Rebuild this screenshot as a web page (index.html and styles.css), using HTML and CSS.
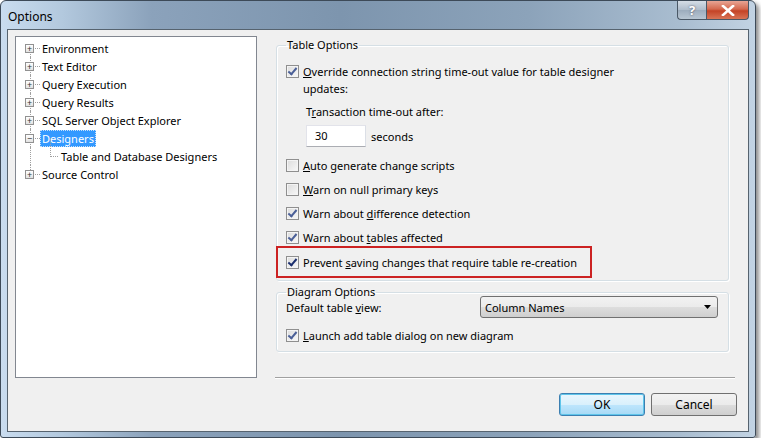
FILE: index.html
```html
<!DOCTYPE html>
<html>
<head>
    <title>Options</title>
    <link rel="stylesheet" href="styles.css">
</head>
<body>
    <div class="window">
        <div class="titlebar">
            <span class="title">Options</span>
            <div class="caption-buttons">
                <span class="cap-btn help">?</span>
                <span class="cap-btn close">
                    <svg width="14" height="11" viewBox="0 0 14 11"><path d="M2 1 L12 10 M12 1 L2 10" stroke="#fff" stroke-width="2.6" stroke-linecap="square"/></svg>
                </span>
            </div>
        </div>

        <div class="client">
            <div class="tree">
                <div class="node first"><span class="exp">+</span><span class="dots"></span><span class="label">Environment</span></div>
                <div class="node"><span class="exp">+</span><span class="dots"></span><span class="label">Text Editor</span></div>
                <div class="node"><span class="exp">+</span><span class="dots"></span><span class="label">Query Execution</span></div>
                <div class="node"><span class="exp">+</span><span class="dots"></span><span class="label">Query Results</span></div>
                <div class="node"><span class="exp">+</span><span class="dots"></span><span class="label">SQL Server Object Explorer</span></div>
                <div class="node"><span class="exp">&minus;</span><span class="dots"></span><span class="label selected">Designers</span></div>
                <div class="node child"><span class="elbow"></span><span class="label">Table and Database Designers</span></div>
                <div class="node last"><span class="exp">+</span><span class="dots"></span><span class="label">Source Control</span></div>
            </div>

            <div class="pane">
                <fieldset class="group table-options">
                    <legend>Table Options</legend>
                    <div class="check-row wrap">
                        <span class="box on"></span>
                        <span><u>O</u>verride connection string time-out value for table designer<br>updates:</span>
                    </div>
                    <div class="timeout">
                        <div class="timeout-label">T<u>r</u>ansaction time-out after:</div>
                        <div class="timeout-input">
                            <span class="textbox">30</span>
                            <span>seconds</span>
                        </div>
                    </div>
                    <div class="check-row"><span class="box"></span><span><u>A</u>uto generate change scripts</span></div>
                    <div class="check-row"><span class="box"></span><span><u>W</u>arn on null primary keys</span></div>
                    <div class="check-row"><span class="box on"></span><span>Warn about <u>d</u>ifference detection</span></div>
                    <div class="check-row"><span class="box on"></span><span>Warn about <u>t</u>ables affected</span></div>
                    <div class="check-row highlight"><span class="box on dark"></span><span>Prevent <u>s</u>aving changes that require table re-creation</span></div>
                </fieldset>

                <fieldset class="group diagram-options">
                    <legend>Diagram Options</legend>
                    <div class="view-row">
                        <span>Default table <u>v</u>iew:</span>
                        <span class="combo">Column Names
                            <svg width="7" height="4" viewBox="0 0 7 4"><path d="M0 0 H7 L3.5 4 Z" fill="#000"/></svg>
                        </span>
                    </div>
                    <div class="check-row"><span class="box on"></span><span><u>L</u>aunch add table dialog on new diagram</span></div>
                </fieldset>

                <div class="separator"></div>

                <div class="buttons">
                    <span class="btn default">OK</span>
                    <span class="btn">Cancel</span>
                </div>
            </div>
        </div>
    </div>
</body>
</html>
```

FILE: styles.css
```css
body {
    margin: 0;
    background: #fff;
    font-family: "Noto Sans", "Open Sans", sans-serif;
    font-size: 11px;
    color: #000;
}
.window {
    width: 756px;
    height: 438px;
    box-sizing: border-box;
    padding: 0 6px 5px 6px;
    border: 1px solid #3d4a58;
    border-radius: 6px 6px 3px 3px;
    background: linear-gradient(90deg, #c9dcef 0%, #b3c9de 8%, #8ba2bb 20%, #7d95ae 45%, #8ca3ba 70%, #a9bdd0 90%, #c2d3e3 100%);
    box-shadow: 3px 3px 4px rgba(0, 0, 0, 0.45);
    display: flex;
    flex-direction: column;
}
.titlebar {
    height: 28px;
    display: flex;
    align-items: flex-start;
    justify-content: space-between;
}
.title {
    margin-top: 7px;
    margin-left: 1px;
    font-size: 12px;
}
.caption-buttons {
    display: flex;
}
.cap-btn {
    height: 19px;
    display: flex;
    align-items: center;
    justify-content: center;
    border: 1px solid #4a5866;
    border-top: none;
    box-sizing: border-box;
}
.help {
    width: 29px;
    border-radius: 0 0 0 4px;
    border-right: none;
    background: linear-gradient(#d5dde6, #aebccb 50%, #9cacbd 51%, #b8c6d3);
    color: #fff;
    font-weight: bold;
    font-size: 13px;
    text-shadow: 0 0 2px #445;
}
.close {
    width: 43px;
    border-radius: 0 0 4px 0;
    background: linear-gradient(#e8a594, #d4694f 45%, #c44326 55%, #d87456);
}
.client {
    flex: 1;
    display: flex;
    background: #f0f0f0;
    border: 1px solid #56636f;
    padding: 6px 0 0 7px;
}
.tree {
    width: 240px;
    height: 338px;
    background: #fff;
    border: 1px solid #828790;
    padding-top: 2px;
}
.node {
    height: 18px;
    display: flex;
    align-items: center;
    padding-left: 9px;
    position: relative;
}
.node::before {
    content: "";
    position: absolute;
    left: 14px;
    top: 0;
    bottom: 0;
    border-left: 1px dotted #a0a0a0;
}
.node.first::before {
    top: 9px;
}
.node.last::before {
    bottom: 9px;
}
.exp {
    position: relative;
    z-index: 1;
    width: 7px;
    height: 7px;
    border: 1px solid #919191;
    background: linear-gradient(#fff, #e2e2e2);
    font-size: 9px;
    line-height: 7px;
    text-align: center;
    color: #333;
}
.dots {
    width: 5px;
    border-top: 1px dotted #a0a0a0;
    margin-left: 1px;
}
.label {
    padding: 0 2px;
    line-height: 17px;
}
.label.selected {
    background: #3399ff;
    color: #fff;
    outline: 1px dotted #c8e0f8;
    outline-offset: -1px;
}
.child {
    padding-left: 34px;
}
.elbow {
    width: 7px;
    height: 18px;
    margin-top: -18px;
    border-left: 1px dotted #a0a0a0;
    border-bottom: 1px dotted #a0a0a0;
    margin-right: 1px;
}
.pane {
    margin-left: 18px;
    flex: 1;
    display: flex;
    flex-direction: column;
}
.group {
    margin: 0 0 0 1px;
    padding: 0 0 0 9px;
    border: 1px solid #d5dfe5;
    border-radius: 3px;
    box-shadow: inset 1px 1px 0 #fff, 1px 1px 0 #fff;
    width: 453px;
    box-sizing: border-box;
    min-width: 0;
}
legend {
    padding: 0 1px;
    line-height: 16px;
}
.table-options {
    height: 244px;
    margin-top: 1px;
}
.check-row {
    display: flex;
    align-items: center;
    height: 24px;
    gap: 4px;
    white-space: nowrap;
}
.check-row.wrap {
    align-items: flex-start;
    height: auto;
    margin-top: 10px;
    line-height: 17px;
}
.check-row.wrap .box {
    margin-top: 2px;
}
.box {
    width: 11px;
    height: 11px;
    border: 1px solid #8f8f8f;
    background: linear-gradient(135deg, #dcdcdc, #f8f8f8);
    box-shadow: inset 0 0 0 1px #f4f4f4;
    flex-shrink: 0;
    position: relative;
}
.box.on::after {
    content: "";
    position: absolute;
    left: 3px;
    top: 0px;
    width: 3px;
    height: 7px;
    border: solid #4a5f97;
    border-width: 0 2px 2px 0;
    transform: rotate(40deg);
}
.box.on.dark::after {
    border-color: #1c2f6e;
}
.timeout {
    margin-left: 20px;
    margin-top: 6px;
    margin-bottom: 6px;
}
.timeout-label {
    line-height: 17px;
}
.timeout-input {
    display: flex;
    align-items: center;
    gap: 5px;
    margin-top: 5px;
}
.textbox {
    width: 50px;
    height: 20px;
    line-height: 20px;
    padding-left: 8px;
    background: #fff;
    border: 1px solid #abadb3;
    border-top-color: #e2e3ea;
    border-left-color: #e2e3ea;
    border-right-color: #dbdfe6;
}
.highlight {
    border: 2px solid #cc2222;
    margin-left: -10px;
    padding-left: 8px;
    width: 304px;
    height: 28px;
    margin-top: -3px;
}
.diagram-options {
    height: 68px;
    margin-top: 3px;
}
.view-row {
    display: flex;
    align-items: center;
    justify-content: space-between;
    height: 22px;
    padding-right: 10px;
    margin-top: -4px;
}
.combo {
    width: 226px;
    height: 20px;
    border: 1px solid #707070;
    border-radius: 3px;
    background: linear-gradient(#f2f2f2 0%, #ebebeb 50%, #dddddd 51%, #cfcfcf 100%);
    display: flex;
    align-items: center;
    justify-content: space-between;
    padding: 0 6px 0 4px;
}
.diagram-options .check-row {
    margin-top: 5px;
}
.separator {
    margin-top: 25px;
    width: 460px;
    border-top: 1px solid #a0a0a0;
    border-bottom: 1px solid #fff;
}
.buttons {
    display: flex;
    justify-content: flex-end;
    gap: 6px;
    margin-top: 14px;
    margin-right: 11px;
}
.btn {
    width: 84px;
    height: 21px;
    border: 1px solid #707070;
    border-radius: 3px;
    background: linear-gradient(#f2f2f2 0%, #ebebeb 50%, #dddddd 51%, #cfcfcf 100%);
    display: flex;
    align-items: center;
    justify-content: center;
    font-size: 12px;
}
.btn.default {
    border-color: #3c7fb1;
    background: linear-gradient(#eaf6fd 0%, #d9f0fc 50%, #bee6fd 51%, #a7d9f5 100%);
    box-shadow: inset 0 0 0 1px #5fc5ea;
}
```
